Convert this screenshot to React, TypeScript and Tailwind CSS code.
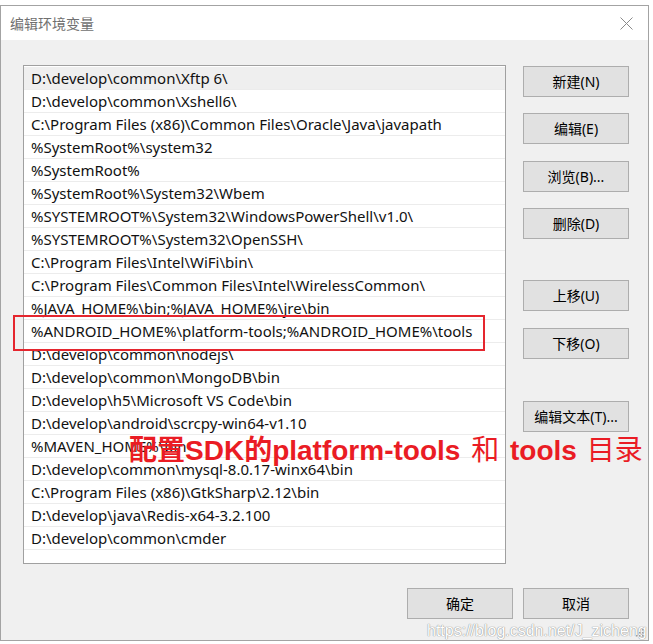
import React from "react";

const paths = [
  "D:\\develop\\common\\Xftp 6\\",
  "D:\\develop\\common\\Xshell6\\",
  "C:\\Program Files (x86)\\Common Files\\Oracle\\Java\\javapath",
  "%SystemRoot%\\system32",
  "%SystemRoot%",
  "%SystemRoot%\\System32\\Wbem",
  "%SYSTEMROOT%\\System32\\WindowsPowerShell\\v1.0\\",
  "%SYSTEMROOT%\\System32\\OpenSSH\\",
  "C:\\Program Files\\Intel\\WiFi\\bin\\",
  "C:\\Program Files\\Common Files\\Intel\\WirelessCommon\\",
  "%JAVA_HOME%\\bin;%JAVA_HOME%\\jre\\bin",
  "%ANDROID_HOME%\\platform-tools;%ANDROID_HOME%\\tools",
  "D:\\develop\\common\\nodejs\\",
  "D:\\develop\\common\\MongoDB\\bin",
  "D:\\develop\\h5\\Microsoft VS Code\\bin",
  "D:\\develop\\android\\scrcpy-win64-v1.10",
  "%MAVEN_HOME%\\bin",
  "D:\\develop\\common\\mysql-8.0.17-winx64\\bin",
  "C:\\Program Files (x86)\\GtkSharp\\2.12\\bin",
  "D:\\develop\\java\\Redis-x64-3.2.100",
  "D:\\develop\\common\\cmder",
];

function Btn({ label, className = "" }: { label: string; className?: string }) {
  return (
    <button
      className={`w-[106px] h-[31px] shrink-0 bg-[#e1e1e1] border border-[#adadad] text-[14px] text-black flex items-center justify-center ${className}`}
    >
      {label}
    </button>
  );
}

const cjk = { fontFamily: '"Noto Sans CJK SC", sans-serif' };

export default function App() {
  return (
    <div
      className="relative w-[653px] h-[644px] bg-white overflow-hidden"
      style={{ fontFamily: '"Noto Sans", "Noto Sans CJK SC", sans-serif' }}
    >
      {/* dialog window */}
      <div className="absolute left-0 top-[5px] w-[649px] h-[636px] border border-[#a3a3a3] flex flex-col">
        {/* title bar */}
        <div className="h-[34px] bg-white flex items-center justify-between pl-[9px] pr-[15px] shrink-0">
          <span className="text-[14px] text-[#707070]">编辑环境变量</span>
          <svg width="13" height="13" viewBox="0 0 13 13">
            <path d="M0.5 0.5 L12.5 12.5 M12.5 0.5 L0.5 12.5" stroke="#8a8a8a" strokeWidth="1" />
          </svg>
        </div>

        {/* body */}
        <div className="flex-1 bg-[#f0f0f0] flex flex-col">
          <div className="flex pt-[25px] pl-[22px] gap-[17px]">
            {/* list */}
            <div className="w-[483px] h-[499px] bg-white border border-[#a0a0a0] pt-[1px]">
              {paths.map((p, i) => (
                <div
                  key={i}
                  className={`h-[23px] border-b border-[#ececec] pl-[7px] flex items-center text-[15px] text-[#111] whitespace-nowrap ${
                    i === 0 ? "bg-[#efefef]" : ""
                  }`}
                >
                  {p}
                </div>
              ))}
            </div>

            {/* side buttons */}
            <div className="flex flex-col pt-[1px]">
              <Btn label="新建(N)" />
              <Btn label="编辑(E)" className="mt-[16px]" />
              <Btn label="浏览(B)..." className="mt-[17px]" />
              <Btn label="删除(D)" className="mt-[16px]" />
              <Btn label="上移(U)" className="mt-[41px]" />
              <Btn label="下移(O)" className="mt-[17px]" />
              <Btn label="编辑文本(T)..." className="mt-[42px]" />
            </div>
          </div>

          <div className="flex justify-end gap-[10px] pr-[19px] mt-[24px]">
            <Btn label="确定" />
            <Btn label="取消" />
          </div>
        </div>
      </div>

      {/* red highlight box */}
      <div className="absolute left-[13px] top-[315px] w-[472px] h-[36px] border-2 border-[#e5262e]" />

      {/* annotation */}
      <div
        className="absolute left-[129px] top-[430px] whitespace-nowrap text-[#ea1c24] text-[28px] leading-[36px]"
        style={{ fontFamily: '"Liberation Sans", "Noto Sans CJK SC", sans-serif' }}
      >
        <span className="font-bold" style={cjk}>配置</span>
        <span className="font-bold">SDK</span>
        <span className="font-bold" style={cjk}>的</span>
        <span className="font-bold">platform-tools </span>
        <span className="font-normal pl-[3px]" style={cjk}>和</span>
        <span className="font-bold pl-[3px]"> tools </span>
        <span className="font-normal pl-[2px]" style={cjk}>目录</span>
      </div>

      {/* watermark */}
      <div
        className="absolute left-[427px] top-[622px] text-[16px] leading-[18px] text-white [text-shadow:0_0_1px_#8c8c8c,0_0_1px_#8c8c8c]"
        style={{ fontFamily: '"Liberation Sans", sans-serif' }}
      >
        https://blog.csdn.net/J_zicheng
      </div>

      {/* resize grip */}
      <svg className="absolute left-[636px] top-[629px]" width="8" height="8" viewBox="0 0 8 8">
        <rect x="6" y="0" width="1.5" height="1.5" fill="#a0a0a0" />
        <rect x="3" y="3" width="1.5" height="1.5" fill="#a0a0a0" />
        <rect x="6" y="3" width="1.5" height="1.5" fill="#a0a0a0" />
        <rect x="0" y="6" width="1.5" height="1.5" fill="#a0a0a0" />
        <rect x="3" y="6" width="1.5" height="1.5" fill="#a0a0a0" />
        <rect x="6" y="6" width="1.5" height="1.5" fill="#a0a0a0" />
      </svg>
    </div>
  );
}
